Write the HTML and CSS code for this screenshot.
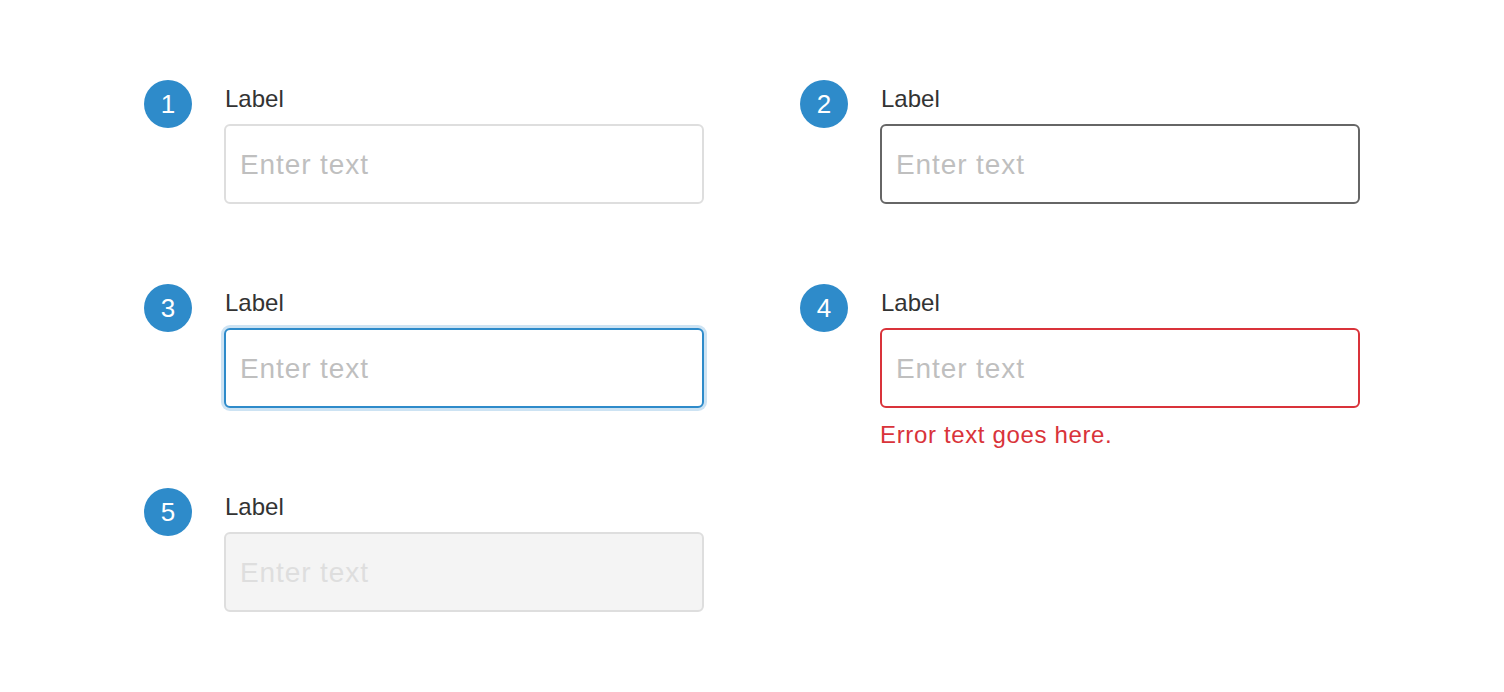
FILE: index.html
```html
<!DOCTYPE html>
<html lang="en">
<head>
<meta charset="utf-8">
<title>Text input states</title>
<link rel="stylesheet" href="styles.css">
</head>
<body>
<main class="grid">
  <section class="item">
    <div class="badge">1</div>
    <div class="field">
      <label class="label" for="f1">Label</label>
      <input id="f1" class="input" type="text" placeholder="Enter text">
    </div>
  </section>
  <section class="item">
    <div class="badge">2</div>
    <div class="field">
      <label class="label" for="f2">Label</label>
      <input id="f2" class="input input-hover" type="text" placeholder="Enter text">
    </div>
  </section>
  <section class="item">
    <div class="badge">3</div>
    <div class="field">
      <label class="label" for="f3">Label</label>
      <input id="f3" class="input input-focus" type="text" placeholder="Enter text">
    </div>
  </section>
  <section class="item">
    <div class="badge">4</div>
    <div class="field">
      <label class="label" for="f4">Label</label>
      <input id="f4" class="input input-error" type="text" placeholder="Enter text">
      <p class="error">Error text goes here.</p>
    </div>
  </section>
  <section class="item">
    <div class="badge">5</div>
    <div class="field">
      <label class="label" for="f5">Label</label>
      <input id="f5" class="input input-disabled" type="text" placeholder="Enter text" disabled>
    </div>
  </section>
</main>
</body>
</html>
```
FILE: styles.css
```css
* { box-sizing: border-box; }
html, body { margin: 0; padding: 0; background: #ffffff; }
body {
  font-family: "Liberation Sans", Arial, sans-serif;
  color: #333333;
}
.grid {
  display: grid;
  grid-template-columns: 560px 560px;
  column-gap: 96px;
  grid-template-rows: repeat(3, 124px);
  row-gap: 80px;
  padding: 80px 0 0 144px;
}
.item {
  display: flex;
  align-items: flex-start;
  gap: 32px;
}
.badge {
  flex: none;
  width: 48px;
  height: 48px;
  border-radius: 50%;
  background: #2e8bca;
  color: #ffffff;
  font-size: 26px;
  line-height: 48px;
  text-align: center;
}
.field {
  display: flex;
  flex-direction: column;
  width: 480px;
}
.label {
  display: block;
  font-size: 24px;
  line-height: 28px;
  margin: 5px 0 11px 1px;
  color: #333333;
}
.input {
  display: block;
  width: 480px;
  height: 80px;
  margin: 0;
  padding: 2px 14px 0;
  border: 2px solid #dedede;
  border-radius: 6px;
  background: #ffffff;
  font-family: "Liberation Sans", Arial, sans-serif;
  font-size: 28px;
  letter-spacing: 0.9px;
  color: #333333;
  outline: none;
}
.input::placeholder { color: #bfbfbf; opacity: 1; }
.input-hover { border-color: #666666; }
.input-focus {
  border-color: #2e8bca;
  box-shadow: 0 0 0 3px #cde3f3;
}
.input-error { border-color: #d9333a; }
.input-disabled {
  background: #f4f4f4;
  border-color: #dedede;
}
.input-disabled::placeholder { color: #dedede; }
.error {
  margin: 13px 0 0;
  font-size: 24px;
  line-height: 28px;
  letter-spacing: 0.65px;
  color: #d9333a;
}
```
